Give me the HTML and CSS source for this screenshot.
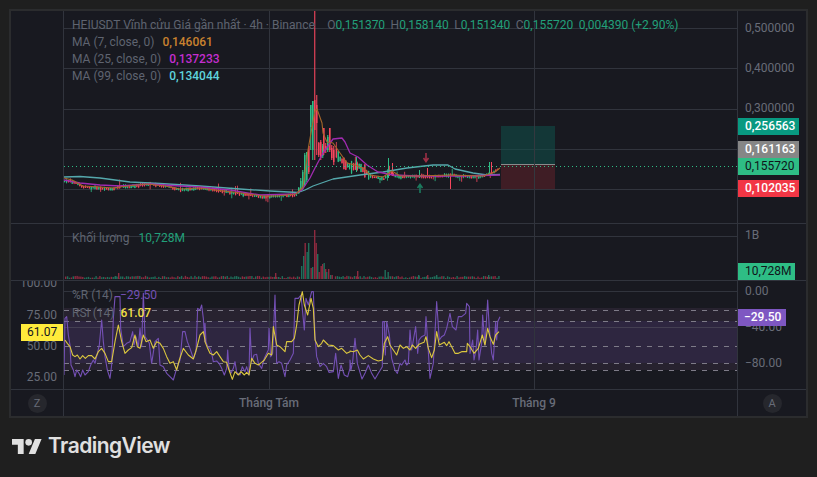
FILE: index.html
```html
<!DOCTYPE html>
<html lang="en">
<head>
  <meta charset="UTF-8" />
  <title>HEIUSDT Chart</title>
  <link rel="stylesheet" href="styles.css">
</head>
<body>

  <div class="widget">
    <!-- main pane -->
    <div class="cell axis-left"></div>
    <div class="cell pane">
      <svg id="mainChart" class="plot" viewBox="64 11 673 212"></svg>
      <div class="legend legend-main">
        <div class="legend-row">
          <span class="legend-title">HEIUSDT Vĩnh cửu Giá gần nhất · 4h · Binance</span>
          <span class="ohlc">O<b>0,151370</b></span>
          <span class="ohlc">H<b>0,158140</b></span>
          <span class="ohlc">L<b>0,151340</b></span>
          <span class="ohlc">C<b>0,155720</b></span>
          <span class="up">0,004390 (+2.90%)</span>
        </div>
        <div class="legend-row">MA (7, close, 0) <span class="val ma7">0,146061</span></div>
        <div class="legend-row">MA (25, close, 0) <span class="val ma25">0,137233</span></div>
        <div class="legend-row">MA (99, close, 0) <span class="val ma99">0,134044</span></div>
      </div>
    </div>
    <div class="cell axis-right">
      <span class="tick t-500">0,500000</span>
      <span class="tick t-400">0,400000</span>
      <span class="tick t-300">0,300000</span>
      <span class="tag tag-tp">0,256563</span>
      <span class="tag tag-entry">0,161163</span>
      <span class="tag tag-last">0,155720</span>
      <span class="tag tag-sl">0,102035</span>
    </div>

    <!-- volume pane -->
    <div class="cell axis-left"></div>
    <div class="cell pane">
      <svg id="volChart" class="plot" viewBox="64 224 673 56"></svg>
      <div class="legend legend-vol">
        <div class="legend-row">Khối lượng <span class="up vol-val">10,728M</span></div>
      </div>
    </div>
    <div class="cell axis-right">
      <span class="tick t-1b">1B</span>
      <span class="tag tag-vol">10,728M</span>
    </div>

    <!-- rsi pane -->
    <div class="cell axis-left">
      <span class="tick-l t-100">100.00</span>
      <span class="tick-l t-75">75.00</span>
      <span class="tick-l t-50">50.00</span>
      <span class="tick-l t-25">25.00</span>
      <span class="tag tag-rsi">61.07</span>
    </div>
    <div class="cell pane">
      <svg id="rsiChart" class="plot" viewBox="64 281 673 108"></svg>
      <div class="legend legend-rsi">
        <div class="legend-row">%R (14) <span class="val wr">−29.50</span></div>
        <div class="legend-row">RSI (14) <span class="val rsi">61.07</span></div>
      </div>
    </div>
    <div class="cell axis-right">
      <span class="tick t-0">0.00</span>
      <span class="tick t-40">−40.00</span>
      <span class="tick t-80">−80.00</span>
      <span class="tag tag-wr">−29.50</span>
    </div>

    <!-- time axis -->
    <div class="cell bottom axis-left center"><span class="circle">Z</span></div>
    <div class="cell bottom time-axis">
      <span class="month m-aug">Tháng Tám</span>
      <span class="month m-sep">Tháng 9</span>
    </div>
    <div class="cell bottom axis-right center"><span class="circle">A</span></div>
  </div>

  <div class="brand">
    <svg class="brand-icon" viewBox="0 4 36 18">
      <path d="M14 22H7V11H0V4h14v18zM28 22h-8l7.5-18h8L28 22z" fill="#e0e0e0"/>
      <circle cx="20" cy="8" r="4" fill="#e0e0e0"/>
    </svg>
    <span class="brand-name">TradingView</span>
  </div>

  <script src="chart.js"></script>
</body>
</html>
```

FILE: styles.css
```css
* {
  box-sizing: border-box;
}

body {
  margin: 0;
  width: 817px;
  height: 477px;
  overflow: hidden;
  background-color: #1f1f1f;
  font-family: Roboto, "Liberation Sans", sans-serif;
  font-size: 12px;
}

.widget {
  display: grid;
  grid-template-columns: 53px 674px 68px;
  grid-template-rows: 213px 57px 109px 26px;
  width: 799px;
  height: 409px;
  margin: 9px 9px 0;
  border: 2px solid #2b2c2e;
  background-color: #181920;
}

.cell {
  position: relative;
  border-bottom: 1px solid #31343d;
}

.cell.bottom {
  border-bottom: none;
}

.axis-left {
  border-right: 1px solid #31343d;
  overflow: hidden;
}

.pane,
.time-axis {
  border-right: 1px solid #31343d;
}

.plot {
  display: block;
  width: 673px;
  height: 100%;
}

.center {
  display: flex;
  align-items: center;
  justify-content: center;
}

/* legends */
.legend {
  position: absolute;
  left: 8px;
  top: 6px;
  color: #5f6470;
  line-height: 17px;
  white-space: nowrap;
}

.legend-rsi .legend-row {
  height: 18px;
}

.legend-title {
  margin-right: 6px;
}

.ohlc {
  margin-left: 3.5px;
  margin-right: -1px;
}

.ohlc b,
.up {
  font-weight: 400;
  color: #22a07a;
}

.ohlc + .up {
  margin-left: 3.5px;
}

.vol-val {
  margin-left: 6px;
}

.val {
  margin-left: 4px;
  font-weight: 500;
}

.ma7,
.ma25,
.ma99 {
  margin-left: 5px;
}

.ma7 {
  color: #c9822f;
}

.ma25 {
  color: #c42ed0;
}

.ma99 {
  color: #5fd4dc;
}

.wr {
  color: #7450b5;
  font-weight: 400;
}

.rsi {
  margin-left: 3px;
  color: #f2de45;
}

/* axis labels */
.tick,
.tick-l,
.tag {
  position: absolute;
  line-height: 17px;
  height: 17px;
  white-space: nowrap;
}

.tick {
  left: 7px;
  color: #686c78;
}

.tick-l {
  right: 6px;
  color: #686c78;
}

.t-500 { top: 9px; }
.t-400 { top: 49px; }
.t-300 { top: 89px; }
.t-1b { top: 3px; }
.t-0 { top: 2px; }
.t-40 { top: 38px; }
.t-80 { top: 74px; }
.t-100 { top: -6px; }
.t-75 { top: 26px; }
.t-50 { top: 57px; }
.t-25 { top: 88px; }

.tag {
  left: 0;
  width: 61px;
  padding-left: 7px;
  font-weight: 500;
  color: #fff;
}

.tag-tp { top: 107px; background-color: #089981; }
.tag-entry { top: 130px; background-color: #868686; }
.tag-last { top: 147px; background-color: #2ebd85; color: #10151a; font-weight: 400; }
.tag-sl { top: 169px; background-color: #f23645; }
.tag-vol { top: 39px; width: 57px; background-color: #2ebd85; color: #10151a; font-weight: 400; }
.tag-wr { top: 28px; width: 48px; padding-left: 6px; background-color: #7e57c2; }

.tag-rsi {
  left: auto;
  right: 0;
  top: 43px;
  width: 42px;
  padding: 0 0 0 6px;
  background-color: #ffeb3b;
  color: #131722;
  font-weight: 400;
}

/* time axis */
.month {
  position: absolute;
  top: 5px;
  line-height: 17px;
  color: #686c78;
  font-weight: 500;
  transform: translateX(-50%);
  white-space: nowrap;
}

.m-aug { left: 205px; }
.m-sep { left: 470px; }

.circle {
  display: flex;
  align-items: center;
  justify-content: center;
  width: 19px;
  height: 19px;
  border-radius: 50%;
  background-color: #26272d;
  color: #686c78;
  font-size: 11px;
}

/* footer */
.brand {
  display: flex;
  align-items: center;
  gap: 6px;
  margin: 15px 0 0 12px;
}

.brand-icon {
  width: 30px;
  height: 15px;
}

.brand-name {
  font-family: Inter, sans-serif;
  font-size: 21px;
  line-height: 26px;
  font-weight: 600;
  letter-spacing: -0.55px;
  color: #e0e0e0;
}
```

FILE: chart.js
```js
const NS = "http://www.w3.org/2000/svg";
const GREEN = "#2ebd85";
const RED = "#f6465d";
const GRID = "#31343d";

function add(svg, tag, attrs) {
  const el = document.createElementNS(NS, tag);
  for (const k in attrs) el.setAttribute(k, attrs[k]);
  svg.appendChild(el);
  return el;
}

function hline(svg, y, color) {
  add(svg, "line", { x1: 64, x2: 737, y1: y + 0.5, y2: y + 0.5, stroke: color || GRID });
}

function vlines(svg, top, bottom) {
  [269.5, 534.5].forEach((x) => add(svg, "line", { x1: x, x2: x, y1: top, y2: bottom, stroke: GRID }));
}

function poly(svg, pts, color, width, opacity) {
  add(svg, "polyline", {
    points: pts.map((p) => p[0] + "," + p[1]).join(" "),
    fill: "none",
    stroke: color,
    "stroke-width": width || 1,
    "stroke-linejoin": "round",
    opacity: opacity || 1
  });
}

function rect(svg, x, y, w, h, fill) {
  add(svg, "rect", { x, y, width: w, height: h, fill });
}

// small repeatable noise so the candles stay the same on every load
let seed = 7;
function rnd() {
  seed = (seed * 16807) % 2147483647;
  return seed / 2147483647;
}

function interp(points, x) {
  for (let i = 1; i < points.length; i++) {
    if (x <= points[i][0]) {
      const a = points[i - 1];
      const b = points[i];
      return a[1] + ((b[1] - a[1]) * (x - a[0])) / (b[0] - a[0]);
    }
  }
  return points[points.length - 1][1];
}

// ---------- main pane ----------
const mid = [
  [64, 181], [70, 181], [83, 187], [100, 188], [113, 189], [120, 186], [128, 187], [147, 184],
  [165, 186], [180, 190], [200, 188], [215, 190], [233, 193], [263, 197], [277, 196], [296, 195],
  [335, 152], [340, 160], [345, 165], [350, 167], [358, 166], [363, 170], [368, 175], [377, 178],
  [383, 179], [390, 173], [397, 177], [417, 176], [432, 177], [450, 175], [467, 177], [483, 176],
  [493, 172], [500, 167]
];

// x, body top, body bottom, wick top, wick bottom, colour
const spike = [
  [298, 188, 193, 187, 194, GREEN], [300, 181, 190, 178, 192, GREEN], [302, 172, 187, 170, 189, GREEN],
  [304, 155, 185, 153, 186, GREEN], [306, 152, 180, 152, 182, GREEN], [308, 146, 172, 146, 174, RED],
  [310, 105, 127, 105, 150, GREEN], [312, 101, 150, 101, 160, GREEN], [314, 100, 130, 10, 160, RED],
  [316, 105, 123, 95, 155, RED], [318, 143, 155, 142, 157, RED], [320, 142, 158, 140, 160, RED],
  [322, 146, 156, 144, 158, GREEN], [323, 128, 153, 128, 155, RED], [325, 146, 150, 143, 153, RED],
  [327, 137, 150, 135, 152, GREEN], [329, 128, 150, 128, 152, RED], [331, 148, 158, 145, 160, RED],
  [333, 150, 162, 146, 165, RED]
];

const ma7 = [
  [64, 178], [72, 180], [83, 186], [100, 187], [113, 188], [120, 187], [128, 186], [147, 184], [165, 186],
  [180, 189], [200, 188], [215, 190], [233, 192], [263, 196], [277, 196], [296, 194], [303, 187], [308, 150],
  [312, 127], [315, 111], [317, 109], [322, 123], [323, 133], [327, 142], [333, 143], [340, 153], [347, 163],
  [355, 165], [363, 168], [370, 175], [383, 177], [392, 171], [400, 176], [417, 176], [450, 175], [483, 176],
  [495, 172], [500, 168]
];
const ma25 = [
  [64, 180], [80, 183], [100, 185], [120, 186], [150, 184], [180, 186], [200, 187], [230, 190], [260, 195],
  [295, 194], [302, 190], [310, 178], [315, 168], [323, 153], [333, 139], [342, 138], [345, 142], [350, 153],
  [358, 157], [367, 165], [378, 172], [393, 175], [417, 176], [460, 176], [500, 175]
];
const ma99 = [
  [64, 177], [80, 176.5], [100, 178], [130, 182], [160, 183.5], [200, 186], [240, 189], [270, 191], [298, 192.5],
  [305, 190], [313, 186], [333, 179], [360, 175], [383, 172], [407, 168], [433, 165], [448, 165], [455, 169],
  [473, 173], [487, 175], [500, 174.5]
];

function drawMain() {
  const svg = document.getElementById("mainChart");
  [28, 68, 109, 149, 189].forEach((y) => hline(svg, y));
  vlines(svg, 11, 223);

  // long/short position box
  rect(svg, 501, 126, 54, 38, "#10504a");
  svg.lastChild.setAttribute("opacity", 0.55);
  rect(svg, 501, 165, 54, 24, "#5a2029");
  svg.lastChild.setAttribute("opacity", 0.6);
  rect(svg, 501, 164, 54, 1, "#8a8a8a");
  add(svg, "line", { x1: 534.5, x2: 534.5, y1: 126, y2: 189, stroke: "#33383f" });

  for (let x = 64; x < 499; x += 1.9) {
    if (x > 297 && x < 334) continue;
    const m = interp(mid, x);
    // the range stays wide for a while after the spike
    const wide = x > 334 && x < 368;
    const half = wide ? 2 + rnd() * 5 : 0.5 + rnd() * 1.1;
    const top = m - half + (rnd() - 0.5);
    const wickUp = rnd() < 0.07 ? 3 + rnd() * 4 : rnd();
    const wickDown = rnd() < 0.05 ? 2 + rnd() * 3 : rnd();
    const color = rnd() < 0.5 ? GREEN : RED;
    rect(svg, x + 0.2, top - wickUp, 0.8, half * 2 + wickUp + wickDown, color);
    rect(svg, x, top, 1.3, half * 2, color);
  }

  spike.forEach((c) => {
    rect(svg, c[0] + 0.2, c[3], 1.1, c[4] - c[3], c[5]);
    rect(svg, c[0], c[1], 1.5, c[2] - c[1], c[5]);
  });

  // tall wicks that stand out of the later range
  [[356, 157, 172, GREEN], [388, 158, 178, GREEN], [392, 163, 176, RED], [450, 174, 189, RED],
   [489, 162, 175, GREEN], [491, 162, 174, RED], [427, 168, 176, RED], [419, 170, 178, GREEN]].forEach((w) => {
    rect(svg, w[0], w[1], 1, w[2] - w[1], w[3]);
  });

  poly(svg, ma99, "#55a8ac", 1.3);
  poly(svg, ma25, "#a02bb0", 1.3);
  poly(svg, ma7, "#a5672a", 1.1);

  // last price
  add(svg, "line", {
    x1: 64, x2: 737, y1: 166.5, y2: 166.5,
    stroke: GREEN, "stroke-dasharray": "1 3"
  });

  // signal arrows
  add(svg, "path", { d: "M426 153v8M423.5 158l2.5 3.5 2.5-3.5", stroke: "#9c2f45", "stroke-width": 1.6, fill: "none" });
  add(svg, "path", { d: "M420 193v-8M417.5 188l2.5-3.5 2.5 3.5", stroke: "#1c7a5e", "stroke-width": 1.6, fill: "none" });
}

// ---------- volume pane ----------
const volBars = [
  [118, 273, "r"], [115, 276, "g"], [275, 273, "r"], [278, 277, "g"], [301, 266, "g"], [303, 256, "g"],
  [304.5, 243, "r"], [306.5, 252, "g"], [308, 243, "g"], [310.5, 268, "r"], [312, 267, "g"], [314, 230, "r"],
  [315.5, 243, "r"], [317, 254, "g"], [318.5, 272, "r"], [320.5, 266, "r"], [322, 264, "r"], [323.5, 263, "g"],
  [325, 269, "r"], [326, 272, "g"], [328, 269, "r"], [330, 275, "g"], [331.5, 275, "r"], [357, 271, "r"],
  [384.5, 270, "g"], [387.5, 272, "g"], [418, 275, "g"], [427, 275, "r"], [436, 275, "g"], [488, 275, "g"]
];

function drawVol() {
  const svg = document.getElementById("volChart");
  hline(svg, 236);
  vlines(svg, 224, 280);
  for (let x = 65; x < 499; x += 1.9) {
    if (x > 299 && x < 334) continue;
    const h = 1 + rnd() * 2.2;
    rect(svg, x, 279 - h, 1.4, h, rnd() < 0.5 ? "#1f6f5a" : "#8e2a3f");
  }
  volBars.forEach((b) => {
    rect(svg, b[0], b[1], 1.4, 279 - b[1], b[2] === "g" ? "#1f6f5a" : "#8e2a3f");
  });
}

// ---------- oscillator pane ----------
// readings taken in three strips, each with its own x offset and 3x scale
function strip(x0, pts) {
  return pts.map((p) => [x0 + p[0] / 3, 285 + p[1] / 3]);
}

const wr = [].concat(
  strip(60, [[12, 270], [15, 100], [20, 95], [25, 150], [30, 180], [33, 240], [40, 255], [45, 275], [50, 255], [57, 265], [62, 275], [68, 255], [75, 270], [85, 260], [92, 240], [100, 225], [105, 235], [112, 205], [118, 180], [125, 105], [130, 170], [135, 215], [142, 255], [150, 280], [155, 240], [160, 100], [165, 35], [180, 35], [182, 130], [190, 185], [200, 175], [210, 170], [218, 140], [222, 180], [228, 155], [235, 185], [240, 130], [245, 185], [250, 25], [255, 155], [262, 165], [268, 175], [275, 235], [285, 170], [295, 160], [300, 240], [310, 245], [320, 265], [330, 275], [340, 285], [350, 250], [360, 225], [368, 140], [375, 140], [382, 170], [390, 190], [400, 220], [408, 200], [413, 70], [420, 75], [425, 60], [430, 100], [435, 170]]),
  strip(205, [[0, 115], [3, 170], [8, 185], [15, 190], [20, 205], [25, 230], [35, 228], [42, 235], [50, 250], [58, 270], [65, 250], [68, 195], [72, 250], [78, 265], [85, 250], [90, 230], [95, 262], [105, 270], [112, 245], [120, 260], [125, 245], [132, 270], [135, 130], [140, 230], [147, 210], [155, 208], [160, 235], [170, 250], [178, 220], [190, 195], [192, 130], [197, 215], [203, 205], [210, 30], [215, 235], [222, 230], [230, 235], [240, 275], [245, 240], [255, 225], [265, 205], [270, 40], [280, 40], [288, 30], [298, 135], [303, 40], [310, 60], [320, 20], [325, 20], [330, 150], [335, 215], [345, 245], [355, 235], [365, 245], [372, 262], [385, 260], [392, 205], [400, 280], [408, 240], [418, 270], [428, 275], [435, 250]]),
  strip(350, [[0, 225], [3, 255], [8, 230], [15, 160], [22, 235], [30, 262], [36, 282], [45, 265], [55, 240], [65, 265], [75, 282], [85, 265], [97, 245], [98, 110], [103, 110], [106, 210], [110, 110], [118, 150], [125, 220], [135, 255], [142, 265], [150, 235], [155, 240], [165, 225], [170, 240], [175, 235], [180, 135], [185, 195], [197, 125], [203, 205], [207, 165], [215, 155], [225, 150], [228, 95], [235, 200], [240, 280], [250, 235], [260, 50], [268, 165], [275, 155], [283, 150], [290, 130], [300, 85], [307, 125], [318, 135], [325, 95], [335, 95], [347, 85], [350, 55], [358, 65], [360, 205], [368, 165], [372, 225], [378, 195], [383, 135], [387, 225], [395, 175], [398, 90], [405, 180], [413, 45], [418, 130], [425, 205], [430, 225], [437, 110], [440, 165], [443, 110], [450, 95]])
);

const rsi = [].concat(
  strip(60, [[15, 165], [22, 175], [30, 185], [38, 210], [45, 215], [52, 210], [60, 222], [68, 212], [76, 220], [85, 212], [95, 212], [105, 222], [115, 200], [125, 190], [135, 205], [145, 230], [155, 230], [165, 170], [175, 120], [185, 170], [195, 205], [205, 195], [215, 188], [225, 150], [232, 185], [240, 190], [250, 150], [258, 170], [270, 165], [280, 190], [290, 170], [300, 175], [310, 190], [320, 215], [330, 235], [340, 230], [350, 255], [358, 225], [370, 190], [385, 210], [400, 222], [410, 190], [420, 150], [430, 140], [435, 165]]),
  strip(205, [[0, 170], [8, 190], [15, 205], [25, 210], [35, 200], [45, 215], [55, 230], [65, 232], [72, 255], [82, 283], [90, 260], [100, 270], [108, 260], [118, 270], [125, 262], [132, 270], [140, 220], [150, 235], [160, 240], [170, 232], [178, 225], [190, 205], [200, 210], [205, 125], [215, 180], [225, 185], [240, 200], [245, 170], [260, 170], [268, 160], [275, 120], [282, 60], [292, 20], [298, 60], [308, 90], [318, 40], [325, 70], [330, 165], [340, 185], [350, 175], [355, 165], [370, 180], [385, 182], [400, 195], [410, 190], [425, 205], [435, 200]]),
  strip(350, [[0, 198], [10, 200], [22, 195], [30, 210], [40, 222], [55, 212], [70, 222], [85, 228], [97, 225], [103, 175], [113, 155], [120, 180], [130, 195], [140, 210], [150, 180], [160, 190], [170, 185], [180, 195], [187, 180], [197, 190], [207, 178], [222, 172], [228, 155], [235, 190], [245, 218], [253, 195], [260, 140], [268, 180], [283, 172], [290, 182], [297, 170], [305, 185], [315, 205], [325, 205], [335, 200], [350, 200], [352, 175], [360, 185], [372, 205], [385, 190], [397, 150], [405, 180], [413, 130], [420, 155], [430, 178], [437, 150], [447, 140]])
);

function drawOsc() {
  const svg = document.getElementById("rsiChart");
  rect(svg, 64, 308, 673, 62, "#27222f");
  rect(svg, 64, 321, 673, 42, "#2e2640");
  hline(svg, 291);
  hline(svg, 327, "#443f52");
  vlines(svg, 281, 389);
  [310, 321, 346, 363, 370].forEach((y) => {
    add(svg, "line", {
      x1: 64, x2: 737, y1: y + 0.5, y2: y + 0.5,
      stroke: "#7e7b88", "stroke-dasharray": "5 6"
    });
  });
  poly(svg, wr, "#7450b5", 1.1);
  poly(svg, rsi, "#dcc83e", 1.1);
}

drawMain();
drawVol();
drawOsc();
```
